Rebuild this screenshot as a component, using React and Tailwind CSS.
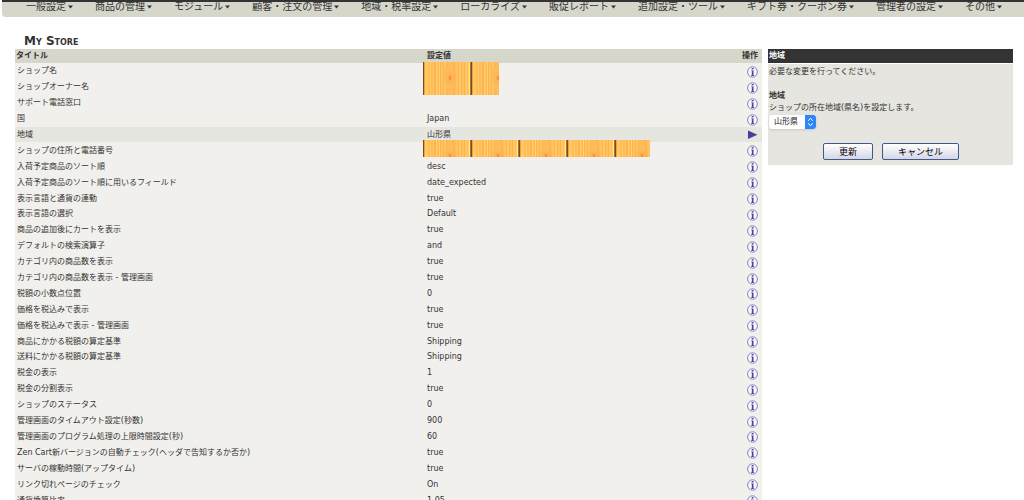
import React from "react";

const menu = [
  "一般設定",
  "商品の管理",
  "モジュール",
  "顧客・注文の管理",
  "地域・税率設定",
  "ローカライズ",
  "販促レポート",
  "追加設定・ツール",
  "ギフト券・クーポン券",
  "管理者の設定",
  "その他",
];

const rows = [
  { title: "ショップ名", mask: "tall" },
  { title: "ショップオーナー名" },
  { title: "サポート電話窓口", value: "" },
  { title: "国", value: "Japan" },
  { title: "地域", value: "山形県", selected: true },
  { title: "ショップの住所と電話番号", mask: "wide" },
  { title: "入荷予定商品のソート順", value: "desc" },
  { title: "入荷予定商品のソート順に用いるフィールド", value: "date_expected" },
  { title: "表示言語と通貨の連動", value: "true" },
  { title: "表示言語の選択", value: "Default" },
  { title: "商品の追加後にカートを表示", value: "true" },
  { title: "デフォルトの検索演算子", value: "and" },
  { title: "カテゴリ内の商品数を表示", value: "true" },
  { title: "カテゴリ内の商品数を表示 - 管理画面", value: "true" },
  { title: "税額の小数点位置", value: "0" },
  { title: "価格を税込みで表示", value: "true" },
  { title: "価格を税込みで表示 - 管理画面", value: "true" },
  { title: "商品にかかる税額の算定基準", value: "Shipping" },
  { title: "送料にかかる税額の算定基準", value: "Shipping" },
  { title: "税金の表示", value: "1" },
  { title: "税金の分割表示", value: "true" },
  { title: "ショップのステータス", value: "0" },
  { title: "管理画面のタイムアウト設定(秒数)", value: "900" },
  { title: "管理画面のプログラム処理の上限時間設定(秒)", value: "60" },
  { title: "Zen Cart新バージョンの自動チェック(ヘッダで告知するか否か)", value: "true" },
  { title: "サーバの稼動時間(アップタイム)", value: "true" },
  { title: "リンク切れページのチェック", value: "On" },
  { title: "通貨換算比率", value: "1.05" },
];

const grain = [
  [0, 1, "#7a4a2c"], [1, 1, "#f79a48"], [2, 3, "#ffca5e"], [5, 2, "#ffbc58"],
  [7, 1, "#ffcc62"], [8, 2, "#ffbc58"], [10, 1, "#ffc660"], [11, 2, "#ffb250"],
  [13, 1, "#ffd070"], [14, 2, "#ffbc5a"], [16, 1, "#ffcf70"], [17, 1, "#ffb452"],
  [18, 2, "#ffc35e"], [20, 1, "#ffb254"], [21, 2, "#ffc862"], [23, 2, "#ffbe5c"],
  [25, 8, "#ffbc58"], [33, 2, "#ffc45e"], [35, 1, "#ffb254"], [36, 2, "#ffc862"],
  [38, 1, "#ffb456"], [39, 2, "#ffc05e"], [41, 1, "#ffb050"], [42, 2, "#ffc666"],
  [44, 1, "#ffbc70"], [45, 1, "#ffcc5c"], [46, 1, "#fff070"], [47, 1, "#a8743e"],
];

function Wood({ id, width, height, className }) {
  return (
    <svg className={className} width={width} height={height} aria-hidden="true">
      <defs>
        <pattern id={id} width="48" height="33" patternUnits="userSpaceOnUse">
          {grain.map(([x, w, fill]) => (
            <rect key={x} x={x} width={w} height="33" fill={fill} />
          ))}
          <g fill="none" stroke="#fba347" strokeWidth="0.6">
            <path d="M24 0C24 6 22 9 22 16S25 25 24 33M30 0C30 6 32 9 32 16S30 26 31 33" />
            <ellipse cx="27" cy="16" rx="3.4" ry="6.5" />
            <ellipse cx="27" cy="16" rx="1.8" ry="4" />
          </g>
          <ellipse cx="27" cy="16" rx="0.8" ry="2.4" fill="#f5821e" />
        </pattern>
      </defs>
      <rect width={width} height={height} fill={`url(#${id})`} />
    </svg>
  );
}

function InfoIcon() {
  return (
    <svg viewBox="0 0 11 12" className="block h-3 w-[11px]" aria-hidden="true">
      <ellipse cx="5.5" cy="6" rx="4.9" ry="5.2" fill="#f8f8fc" stroke="#7a77b4" strokeWidth="0.9" />
      <path d="M4.7 2h1.8v1.6H4.7zM4 4.4h2.5v4.8h.7v.7H4v-.7h.8V5.1H4z" fill="#49449c" />
    </svg>
  );
}

function ArrowIcon() {
  return (
    <svg viewBox="0 0 11 12" className="block h-3 w-[11px]" aria-hidden="true">
      <path d="M1 0.6L10.4 4.8L1 9Z" fill="#443f98" />
    </svg>
  );
}

function SettingRow({ row }) {
  return (
    <tr className={row.selected ? "bg-[#e6e6e1]" : ""}>
      <td className="p-0 pl-0.5">{row.title}</td>
      <td className="relative p-0 pl-1">
        {row.mask === "tall" && (
          <Wood id="wood-tall" width={76} height={33} className="absolute -top-px left-0 z-10" />
        )}
        {row.mask === "wide" && (
          <Wood id="wood-wide" width={227} height={17} className="absolute -top-0.5 left-0 z-10" />
        )}
        {row.value}
      </td>
      <td className="p-0 pr-1">
        <a href="#edit" aria-label={row.title} className="flex justify-end pt-0.5">
          {row.selected ? <ArrowIcon /> : <InfoIcon />}
        </a>
      </td>
    </tr>
  );
}

export default function App() {
  return (
    <div className="h-screen overflow-hidden bg-white font-['DejaVu_Sans','Noto_Sans_CJK_JP',sans-serif] text-[8px] text-[#333]">
      <nav className="ml-0.5 rounded-bl-sm border-t-2 border-[#333] bg-[#d6d6cb]">
        <ul className="-mt-[3px] flex h-[18px] gap-[22px] overflow-hidden pl-6 text-[10px] leading-[15px] whitespace-nowrap">
          {menu.map((label) => (
            <li key={label}>
              <a href="#menu" className="flex items-center gap-0.5">
                {label}
                <svg viewBox="0 0 5 4" className="h-1 w-[5px]" aria-hidden="true">
                  <path d="M0 0.5H5L2.5 3.5Z" fill="#333" />
                </svg>
              </a>
            </li>
          ))}
        </ul>
      </nav>

      <main className="pt-4 pr-[11px] pl-[15px]">
        <h1 className="pl-[9px] text-xs leading-4 font-bold [font-variant:small-caps]">My Store</h1>
        <div className="flex items-start gap-1.5">
          <table className="h-[459px] flex-1 table-fixed border-collapse bg-[#f1f0ed] leading-[15px] whitespace-nowrap">
            <thead>
              <tr className="h-[14px] bg-[#d6d6cb] text-left leading-[14px]">
                <th className="w-[408px] p-0 pl-px">タイトル</th>
                <th className="p-0 pl-1">設定値</th>
                <th className="w-10 p-0 pr-1 text-right">操作</th>
              </tr>
            </thead>
            <tbody>
              {rows.map((row) => (
                <SettingRow key={row.title} row={row} />
              ))}
            </tbody>
          </table>

          <aside className="w-[245px]">
            <h2 className="bg-[#333] pl-px leading-[14px] font-bold text-white">地域</h2>
            <form className="mt-px bg-[#e6e5e0] pb-[5px] pl-px leading-3" onSubmit={(e) => e.preventDefault()}>
              <p className="pt-0.5">必要な変更を行ってください。</p>
              <label htmlFor="zone" className="mt-3 block">
                <b>地域</b>
                <br />
                ショップの所在地域(県名)を設定します。
              </label>
              <span className="relative mt-px inline-flex">
                <select
                  id="zone"
                  defaultValue="山形県"
                  className="h-[14px] w-[47px] appearance-none rounded-[3px] bg-white pl-[5px] text-[8px] leading-3 text-[#222] shadow-sm"
                >
                  <option>山形県</option>
                </select>
                <svg viewBox="0 0 11 14" className="pointer-events-none absolute top-0 right-0 h-[14px] w-[11px]" aria-hidden="true">
                  <path d="M0 0H8Q11 0 11 3V11Q11 14 8 14H0Z" fill="#2f86f7" />
                  <path d="M3.3 5.8L5.5 3.2L7.7 5.8M3.3 8.2L5.5 10.8L7.7 8.2" fill="none" stroke="#fff" />
                </svg>
              </span>
              <div className="mt-[14px] flex justify-center gap-[9px] text-[9px]">
                <button className="h-[17px] w-[50px] rounded-xs border border-[#3c5a8c] bg-linear-to-b from-white to-[#d6d6e6] text-black">更新</button>
                <button className="h-[17px] w-[77px] rounded-xs border border-[#3c5a8c] bg-linear-to-b from-white to-[#d6d6e6] text-black">キャンセル</button>
              </div>
            </form>
          </aside>
        </div>
      </main>
    </div>
  );
}
